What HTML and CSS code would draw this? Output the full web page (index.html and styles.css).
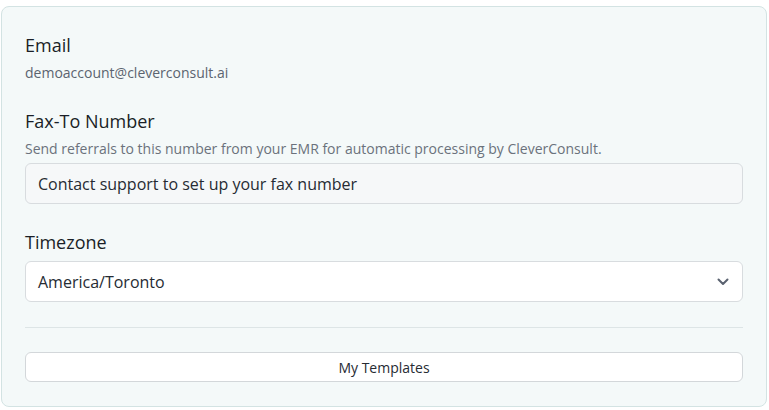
FILE: index.html
```html
<!DOCTYPE html>
<html>
<head>
<meta charset="utf-8">
<link rel="stylesheet" href="styles.css">
</head>
<body>
<div class="card">
  <div class="field">
    <div class="label">Email</div>
    <div class="value">demoaccount@cleverconsult.ai</div>
  </div>
  <div class="field fax">
    <div class="label">Fax-To Number</div>
    <div class="hint">Send referrals to this number from your EMR for automatic processing by CleverConsult.</div>
    <div class="box">Contact support to set up your fax number</div>
  </div>
  <div class="field tz">
    <div class="label">Timezone</div>
    <div class="box select">
      <span>America/Toronto</span>
      <svg class="chev" width="12" height="8" viewBox="0 0 12 8"><path d="M1.5 1.5 L6 6 L10.5 1.5" fill="none" stroke="#5a6270" stroke-width="2" stroke-linecap="round" stroke-linejoin="round"/></svg>
    </div>
  </div>
  <div class="divider"></div>
  <button class="btn">My Templates</button>
</div>
</body>
</html>
```
FILE: styles.css
```css
* { box-sizing: border-box; }
html, body { margin: 0; padding: 0; background: #ffffff; }
body { font-family: "Open Sans", "Noto Sans", sans-serif; color: #1c2129; }
.card {
  margin: 6px 2px 0 1px;
  height: 401px;
  border: 1px solid #d3e3e3;
  border-radius: 8px;
  background: #f4f9f9;
  padding: 24px 23px 0 23px;
  display: flex;
  flex-direction: column;
}
.label { font-size: 18px; line-height: 28px; color: #1a1f27; }
.value { font-size: 14px; line-height: 20px; color: #5b6470; margin-top: 4px; }
.fax { margin-top: 24px; }
.hint { font-size: 14px; line-height: 20px; color: #6b727c; margin-top: 4px; }
.box {
  margin-top: 4px;
  height: 41px;
  border: 1px solid #d8dcdf;
  border-radius: 6px;
  background: #ffffff;
  font-size: 16px;
  padding: 0 12px;
  display: flex;
  align-items: center;
  color: #262b33;
}
.fax .box { background: #f6f8f9; }
.tz { margin-top: 24px; }
.tz .box { margin-top: 5px; }
.select { justify-content: space-between; }
.chev { margin-right: 1px; }
.divider { height: 1px; background: #dde5e6; margin-top: 25px; }
.btn {
  margin-top: 24px;
  height: 30px;
  border: 1px solid #d3d7da;
  border-radius: 6px;
  background: #ffffff;
  font-family: "Open Sans", "Noto Sans", sans-serif;
  font-size: 14px;
  color: #262b33;
  padding: 0;
}
```
